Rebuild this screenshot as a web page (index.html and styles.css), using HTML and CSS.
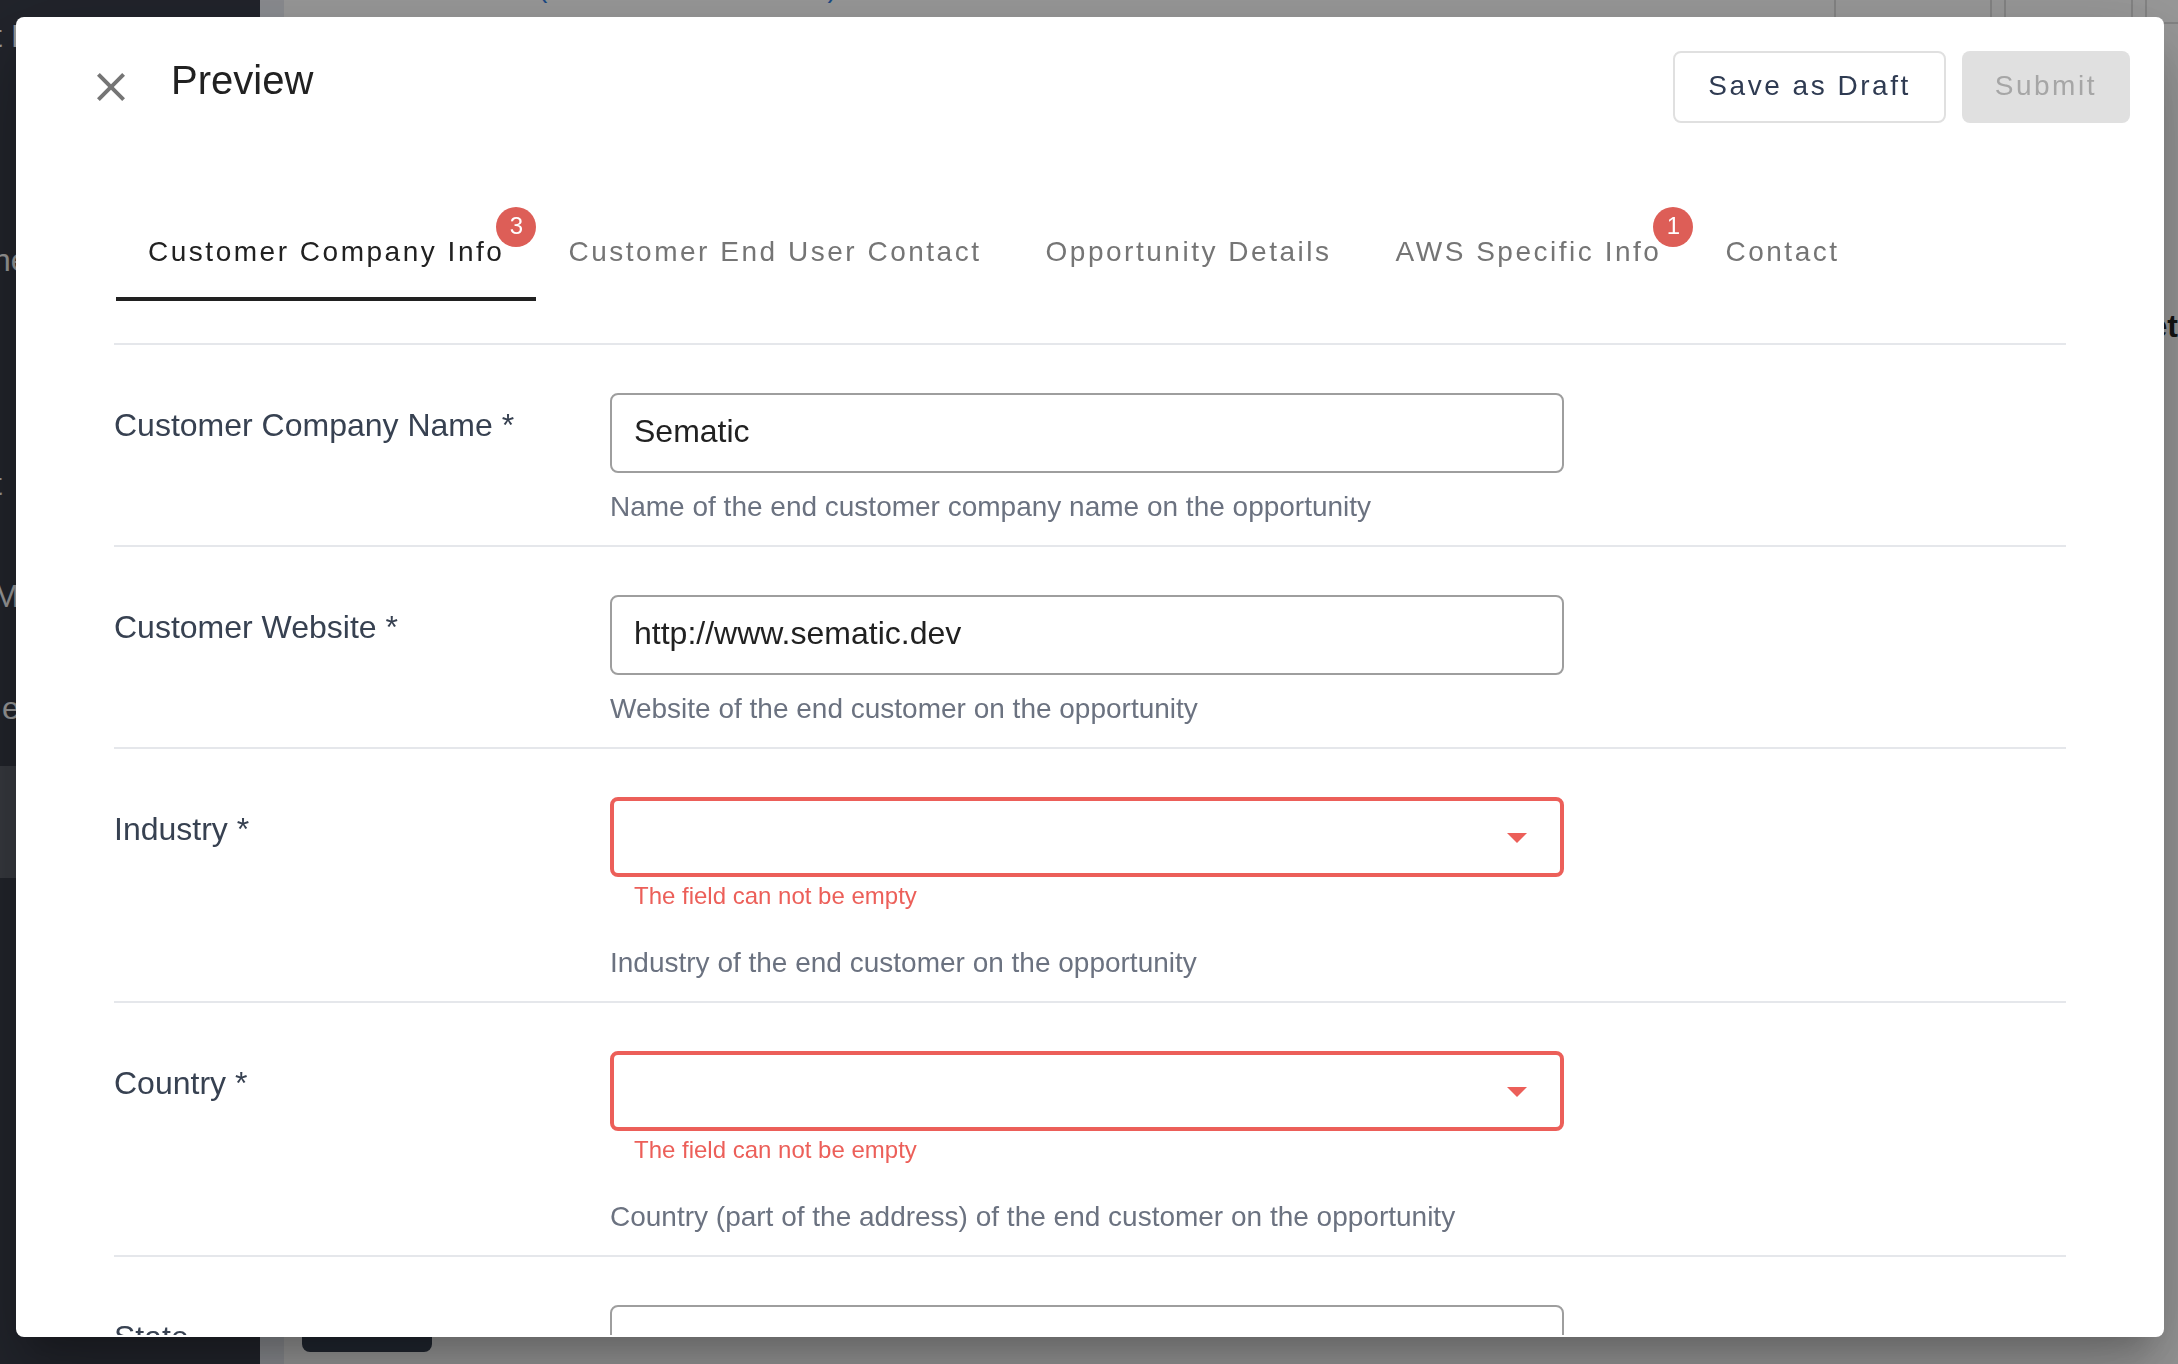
FILE: index.html
```html
<!DOCTYPE html>
<html lang="en">
<head>
  <meta charset="UTF-8" />
  <meta name="viewport" content="width=device-width, initial-scale=1.0" />
  <title>Preview</title>
  <link rel="stylesheet" href="styles.css">
</head>

<body>

<!-- page behind the dialog -->
<div class="page">
  <nav class="sidebar">
    <a href="#" class="nav-item">t I</a>
    <a href="#" class="nav-item"></a>
    <a href="#" class="nav-item">ne</a>
    <a href="#" class="nav-item"></a>
    <a href="#" class="nav-item">t</a>
    <a href="#" class="nav-item">M</a>
    <a href="#" class="nav-item"> e</a>
    <a href="#" class="nav-item active"></a>
  </nav>
  <div class="gutter"></div>
  <main class="main">
    <div class="toolbar">
      <a href="#" class="toolbar-link">(                                    )</a>
      <div class="box box-wide"></div>
      <div class="box"></div>
      <div class="box box-last"></div>
    </div>
    <h2 class="page-heading">et</h2>
    <button class="page-btn" type="button" aria-label="Add"></button>
  </main>
</div>

<div class="backdrop">
  <div class="modal" role="dialog" aria-labelledby="title">
    <header class="modal-header">
      <button class="close-btn" type="button" aria-label="Close">
        <svg viewBox="0 0 24 24" width="48" height="48">
          <path d="M19 6.41L17.59 5 12 10.59 6.41 5 5 6.41 10.59 12 5 17.59 6.41 19 12 13.41 17.59 19 19 17.59 13.41 12z" />
        </svg>
      </button>
      <h1 class="title" id="title">Preview</h1>
      <div class="actions">
        <button class="btn btn-outline" type="button">Save as Draft</button>
        <button class="btn btn-disabled" type="button" disabled>Submit</button>
      </div>
    </header>

    <div class="tabs" role="tablist">
      <button class="tab selected" type="button" role="tab" aria-selected="true">Customer Company Info<span class="badge">3</span></button>
      <button class="tab" type="button" role="tab">Customer End User Contact</button>
      <button class="tab" type="button" role="tab">Opportunity Details</button>
      <button class="tab" type="button" role="tab">AWS Specific Info<span class="badge">1</span></button>
      <button class="tab" type="button" role="tab">Contact</button>
    </div>

    <form class="form">
      <div class="row">
        <label class="label" for="company">Customer Company Name *</label>
        <div class="field">
          <input class="control" id="company" type="text" value="Sematic" />
          <p class="help">Name of the end customer company name on the opportunity</p>
        </div>
      </div>
      <div class="row">
        <label class="label" for="website">Customer Website *</label>
        <div class="field">
          <input class="control" id="website" type="text" value="http://www.sematic.dev" />
          <p class="help">Website of the end customer on the opportunity</p>
        </div>
      </div>
      <div class="row">
        <label class="label" for="industry">Industry *</label>
        <div class="field">
          <div class="select-wrap">
            <select class="control invalid" id="industry"><option></option></select>
            <svg class="arrow" viewBox="0 0 20 10" width="20" height="10"><path d="M0 0h20L10 10z" /></svg>
          </div>
          <p class="error">The field can not be empty</p>
          <p class="help">Industry of the end customer on the opportunity</p>
        </div>
      </div>
      <div class="row">
        <label class="label" for="country">Country *</label>
        <div class="field">
          <div class="select-wrap">
            <select class="control invalid" id="country"><option></option></select>
            <svg class="arrow" viewBox="0 0 20 10" width="20" height="10"><path d="M0 0h20L10 10z" /></svg>
          </div>
          <p class="error">The field can not be empty</p>
          <p class="help">Country (part of the address) of the end customer on the opportunity</p>
        </div>
      </div>
      <div class="row">
        <label class="label" for="state">State</label>
        <div class="field">
          <input class="control" id="state" type="text" />
        </div>
      </div>
    </form>
  </div>
</div>

</body>
</html>
```
FILE: styles.css
```css
* {
  margin: 0;
  padding: 0;
  box-sizing: border-box;
}

body, html {
  height: 100%;
  font-family: "Liberation Sans", Arial, sans-serif;
  overflow: hidden;
}

button, input, select {
  font-family: inherit;
}

/* page behind the dialog */
.page {
  display: flex;
  height: 100vh;
  background: #fff;
}

.sidebar {
  width: 260px;
  overflow: hidden;
  margin-top: -18px;
  background: #383c48;
}

.nav-item {
  display: block;
  height: 112px;
  text-indent: -7px;
  line-height: 108px;
  font-size: 32px;
  white-space: pre;
  color: #fff;
  text-decoration: none;
}

.nav-item.active {
  background: rgba(255, 255, 255, 0.18);
}

.gutter {
  width: 24px;
  background: #e8ebf2;
}

.main {
  flex: 1;
  display: flex;
  flex-direction: column;
  overflow: hidden;
}

.toolbar {
  display: flex;
  height: 24px;
  justify-content: flex-end;
  gap: 12px;
}

.toolbar-link {
  flex: 1;
  margin-top: -28px;
  padding-left: 254px;
  font-size: 28px;
  white-space: pre;
  color: #2f7de0;
  text-decoration: none;
}

.box {
  width: 129px;
  border: 2px solid #ddd;
  border-top: 0;
}

.box-wide {
  width: 158px;
}

.box-last {
  width: 33px;
  border-right: 0;
}

.page-heading {
  margin-top: 284px;
  font-size: 32px;
  text-align: right;
  line-height: 36px;
  color: #222;
}

.page-btn {
  width: 130px;
  height: 72px;
  margin: auto 0 12px 18px;
  border: 0;
  border-radius: 8px;
  background: #374151;
}

/* dialog */
.backdrop {
  position: fixed;
  inset: 0;
  display: flex;
  padding: 17px 14px 27px 16px;
  background: rgba(0, 0, 0, 0.4);
}

.modal {
  flex: 1;
  display: flex;
  flex-direction: column;
  padding-bottom: 2px;
  border-radius: 8px;
  background: #fff;
  box-shadow: 0 22px 30px -14px rgba(0, 0, 0, 0.2), 0 48px 76px 6px rgba(0, 0, 0, 0.14), 0 18px 92px 16px rgba(0, 0, 0, 0.12);
}

.modal-header {
  display: flex;
  align-items: flex-start;
  padding: 34px 34px 0 71px;
}

.close-btn {
  height: 48px;
  margin-top: 12px;
  border: 0;
  background: none;
}

.close-btn svg {
  display: block;
  fill: #757575;
}

.title {
  flex: 1;
  margin-left: 36px;
  font-size: 40px;
  font-weight: 400;
  line-height: 58px;
  color: #212121;
}

.actions {
  display: flex;
  gap: 16px;
}

.btn {
  height: 72px;
  padding: 0 33px 2px;
  border: 0;
  border-radius: 8px;
  font-size: 28px;
  letter-spacing: 0.09em;
}

.btn-outline {
  border: 2px solid #e0e0e0;
  background: #fff;
  color: #2f3b52;
}

.btn-disabled {
  background: #e0e0e0;
  color: #a6a6a6;
}

.tabs {
  display: flex;
  padding: 82px 98px 0 100px;
}

.tab {
  position: relative;
  height: 96px;
  padding: 2px 32px 0;
  border: 0;
  border-bottom: 4px solid transparent;
  background: none;
  font-size: 28px;
  letter-spacing: 0.09em;
  color: #757575;
}

.tab.selected {
  border-bottom-color: #212121;
  color: #212121;
}

.badge {
  position: absolute;
  top: 2px;
  right: 0;
  width: 40px;
  height: 40px;
  border-radius: 50%;
  background: #dd5e57;
  font-size: 24px;
  line-height: 38px;
  letter-spacing: 0;
  text-align: center;
  color: #fff;
}

.form {
  flex: 1;
  min-height: 0;
  overflow: hidden;
  margin: 42px 98px 0;
}

.row {
  display: grid;
  grid-template-columns: 496fr 954fr 502fr;
  padding: 48px 0 20px;
  border-top: 2px solid #e5e7eb;
}

.label {
  padding-top: 12px;
  font-size: 32px;
  line-height: 40px;
  color: #374151;
}

.control {
  display: block;
  width: 100%;
  height: 80px;
  padding: 0 22px 4px;
  border: 2px solid #9e9e9e;
  border-radius: 8px;
  background: #fff;
  font-size: 32px;
  color: #212121;
  appearance: none;
}

.control.invalid {
  border: 4px solid #ec5f59;
}

.select-wrap {
  position: relative;
}

.arrow {
  position: absolute;
  top: 36px;
  right: 37px;
  fill: #ec5f59;
}

.error {
  padding: 0 24px 14px;
  font-size: 24px;
  line-height: 38px;
  color: #ec5f59;
}

.help {
  margin-top: 16px;
  font-size: 28px;
  line-height: 36px;
  color: #6b7280;
}
```
